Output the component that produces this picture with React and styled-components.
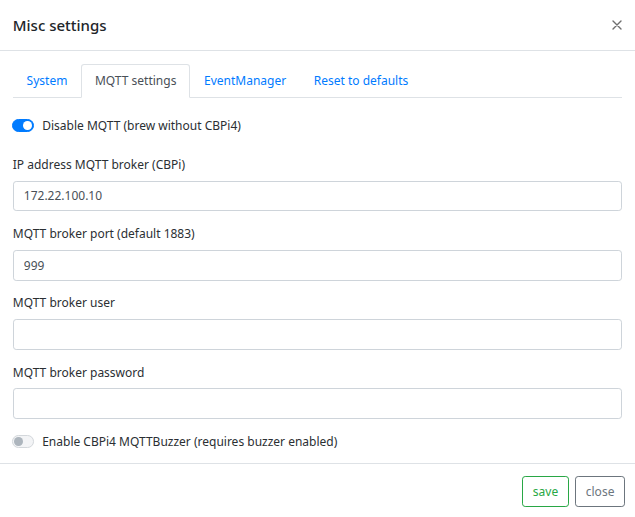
import React from "react";
import styled, { createGlobalStyle } from "styled-components";

const Global = createGlobalStyle`
  html, body { margin: 0; padding: 0; background: #fff; }
  body {
    font-family: "Noto Sans", "Open Sans", sans-serif;
    font-size: 12px;
    line-height: 19.2px;
    color: #2b2f33;
  }
  * { box-sizing: border-box; }
`;

const Modal = styled.div`
  width: 635px;
  background: #fff;
  display: flex;
  flex-direction: column;
`;

const Header = styled.div`
  display: flex;
  align-items: center;
  justify-content: space-between;
  padding: 12.8px;
  border-bottom: 1px solid #dee2e6;
  height: 51px;
`;

const Title = styled.h5`
  margin: 0;
  font-size: 15px;
  font-weight: 500;
  line-height: 24px;
  color: #212529;
`;

const Close = styled.button`
  border: 0;
  background: transparent;
  padding: 0;
  display: flex;
  cursor: pointer;
`;

const Body = styled.div`
  padding: 12.8px 12.8px 11.8px;
`;

const Tabs = styled.div`
  display: flex;
  border-bottom: 1px solid #dee2e6;
`;

const Tab = styled.div`
  padding: 6.4px 12.8px;
  margin-bottom: -1px;
  border: 1px solid ${(p) => (p.$active ? "#dee2e6" : "transparent")};
  border-bottom-color: ${(p) => (p.$active ? "#fff" : "transparent")};
  border-radius: 3.2px 3.2px 0 0;
  background: ${(p) => (p.$active ? "#fff" : "transparent")};
  color: ${(p) => (p.$active ? "#495057" : "#007bff")};
  line-height: 19.2px;
`;

const Content = styled.div`
  padding-top: 18.5px;
`;

const SwitchRow = styled.label`
  display: flex;
  align-items: center;
  gap: 8px;
  line-height: 19.2px;
  margin-bottom: ${(p) => (p.$last ? "0" : "19.5px")};
`;

const Track = styled.span`
  position: relative;
  display: inline-block;
  width: 22.4px;
  height: 12.8px;
  border-radius: 6.4px;
  border: 1px solid ${(p) => (p.$on ? "#007bff" : "#d3d7db")};
  background: ${(p) => (p.$on ? "#007bff" : "#f3f4f6")};
  flex-shrink: 0;
  margin-left: -1px;
`;

const Knob = styled.span`
  position: absolute;
  top: 1px;
  left: ${(p) => (p.$on ? "10.6px" : "1px")};
  width: 8.8px;
  height: 8.8px;
  border-radius: 50%;
  background: ${(p) => (p.$on ? "#fff" : "#adb5bd")};
`;

const Group = styled.div`
  margin-bottom: 12.8px;
`;

const Label = styled.label`
  display: block;
  margin-bottom: 6.4px;
  line-height: 19.2px;
`;

const Input = styled.input`
  display: block;
  width: 100%;
  height: 30.8px;
  padding: 4.8px 10px;
  font: inherit;
  font-size: 12px;
  color: #495057;
  border: 1px solid #ced4da;
  border-radius: 3.2px;
  background: #fff;
  outline: none;
`;

const Footer = styled.div`
  display: flex;
  justify-content: flex-end;
  align-items: center;
  padding: 8.8px 10px;
  border-top: 1px solid #dee2e6;
  gap: 6.4px;
`;

const Button = styled.button`
  margin: 3.2px 0;
  font: inherit;
  font-size: 12px;
  line-height: 19.2px;
  padding: 4.8px 9.6px;
  border-radius: 3.2px;
  background: #fff;
  border: 1px solid ${(p) => p.$color};
  color: ${(p) => p.$color};
  cursor: pointer;
`;

function Switch({ on, children, last }) {
  return (
    <SwitchRow $last={last}>
      <Track $on={on}>
        <Knob $on={on} />
      </Track>
      <span>{children}</span>
    </SwitchRow>
  );
}

const fields = [
  ["IP address MQTT broker (CBPi)", "172.22.100.10"],
  ["MQTT broker port (default 1883)", "999"],
  ["MQTT broker user", ""],
  ["MQTT broker password", ""],
];

export default function App() {
  return (
    <>
      <Global />
      <Modal>
        <Header>
          <Title>Misc settings</Title>
          <Close aria-label="close">
            <svg width="10" height="10" viewBox="0 0 10 10">
              <path d="M1 1 L9 9 M9 1 L1 9" stroke="#6f6f6f" strokeWidth="1.4" strokeLinecap="round" />
            </svg>
          </Close>
        </Header>
        <Body>
          <Tabs>
            <Tab>System</Tab>
            <Tab $active>MQTT settings</Tab>
            <Tab>EventManager</Tab>
            <Tab>Reset to defaults</Tab>
          </Tabs>
          <Content>
            <Switch on>Disable MQTT (brew without CBPi4)</Switch>
            {fields.map(([l, v]) => (
              <Group key={l}>
                <Label>{l}</Label>
                <Input defaultValue={v} />
              </Group>
            ))}
            <Switch last>Enable CBPi4 MQTTBuzzer (requires buzzer enabled)</Switch>
          </Content>
        </Body>
        <Footer>
          <Button $color="#28a745">save</Button>
          <Button $color="#6c757d">close</Button>
        </Footer>
      </Modal>
    </>
  );
}
